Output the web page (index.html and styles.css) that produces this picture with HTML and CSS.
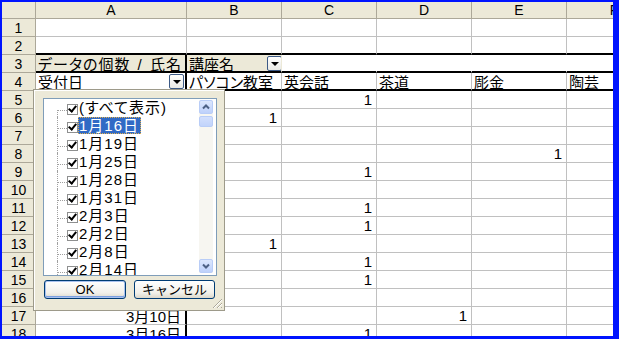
FILE: index.html
```html
<!DOCTYPE html>
<html>

<head>
  <meta charset="utf-8" />
  <title>ピボットテーブル - 受付日</title>
  <link rel="stylesheet" href="styles.css">
</head>

<body>
  <div class="sheet">
    <div class="grid">
      <!-- 列見出し -->
      <div class="head"></div>
      <div class="head">A</div>
      <div class="head">B</div>
      <div class="head">C</div>
      <div class="head">D</div>
      <div class="head">E</div>
      <div class="head">F</div>

      <div class="rowhead">1</div>
      <div class="cell"></div><div class="cell"></div><div class="cell"></div><div class="cell"></div><div class="cell"></div><div class="cell"></div>

      <div class="rowhead">2</div>
      <div class="cell pv-row"></div><div class="cell pv-row"></div><div class="cell pv-row"></div><div class="cell pv-row"></div><div class="cell pv-row"></div><div class="cell pv-row"></div>

      <!-- ピボットのフィールド行 -->
      <div class="rowhead">3</div>
      <div class="cell pv-row pv-a pv-field pv-title">データの個数 / 氏名</div>
      <div class="cell pv-row pv-field pv-open">講座名<span class="drop"></span></div>
      <div class="cell pv-row pv-open"></div>
      <div class="cell pv-row pv-open"></div>
      <div class="cell pv-row pv-open"></div>
      <div class="cell pv-row pv-open"></div>

      <div class="rowhead">4</div>
      <div class="cell pv-row pv-a">受付日<span class="drop"></span></div>
      <div class="cell pv-row">パソコン教室</div>
      <div class="cell pv-row">英会話</div>
      <div class="cell pv-row">茶道</div>
      <div class="cell pv-row">彫金</div>
      <div class="cell pv-row">陶芸</div>

      <div class="rowhead">5</div>
      <div class="cell pv-a"></div><div class="cell"></div><div class="cell num">1</div><div class="cell"></div><div class="cell"></div><div class="cell"></div>

      <div class="rowhead">6</div>
      <div class="cell pv-a"></div><div class="cell num">1</div><div class="cell"></div><div class="cell"></div><div class="cell"></div><div class="cell"></div>

      <div class="rowhead">7</div>
      <div class="cell pv-a"></div><div class="cell"></div><div class="cell"></div><div class="cell"></div><div class="cell"></div><div class="cell"></div>

      <div class="rowhead">8</div>
      <div class="cell pv-a"></div><div class="cell"></div><div class="cell"></div><div class="cell"></div><div class="cell num">1</div><div class="cell"></div>

      <div class="rowhead">9</div>
      <div class="cell pv-a"></div><div class="cell"></div><div class="cell num">1</div><div class="cell"></div><div class="cell"></div><div class="cell"></div>

      <div class="rowhead">10</div>
      <div class="cell pv-a"></div><div class="cell"></div><div class="cell"></div><div class="cell"></div><div class="cell"></div><div class="cell"></div>

      <div class="rowhead">11</div>
      <div class="cell pv-a"></div><div class="cell"></div><div class="cell num">1</div><div class="cell"></div><div class="cell"></div><div class="cell"></div>

      <div class="rowhead">12</div>
      <div class="cell pv-a"></div><div class="cell"></div><div class="cell num">1</div><div class="cell"></div><div class="cell"></div><div class="cell"></div>

      <div class="rowhead">13</div>
      <div class="cell pv-a"></div><div class="cell num">1</div><div class="cell"></div><div class="cell"></div><div class="cell"></div><div class="cell"></div>

      <div class="rowhead">14</div>
      <div class="cell pv-a"></div><div class="cell"></div><div class="cell num">1</div><div class="cell"></div><div class="cell"></div><div class="cell"></div>

      <div class="rowhead">15</div>
      <div class="cell pv-a"></div><div class="cell"></div><div class="cell num">1</div><div class="cell"></div><div class="cell"></div><div class="cell"></div>

      <div class="rowhead">16</div>
      <div class="cell pv-a"></div><div class="cell"></div><div class="cell"></div><div class="cell"></div><div class="cell"></div><div class="cell"></div>

      <div class="rowhead">17</div>
      <div class="cell pv-a num">3月10日</div><div class="cell"></div><div class="cell"></div><div class="cell num">1</div><div class="cell"></div><div class="cell"></div>

      <div class="rowhead">18</div>
      <div class="cell pv-a num">3月16日</div><div class="cell"></div><div class="cell num">1</div><div class="cell"></div><div class="cell"></div><div class="cell"></div>
    </div>

    <!-- 受付日のドロップダウン -->
    <div class="filter">
      <div class="tree">
        <ul class="items">
          <li class="item"><span class="check"></span><span class="label">(すべて表示)</span></li>
          <li class="item"><span class="check"></span><span class="label selected">1月16日</span></li>
          <li class="item"><span class="check"></span><span class="label">1月19日</span></li>
          <li class="item"><span class="check"></span><span class="label">1月25日</span></li>
          <li class="item"><span class="check"></span><span class="label">1月28日</span></li>
          <li class="item"><span class="check"></span><span class="label">1月31日</span></li>
          <li class="item"><span class="check"></span><span class="label">2月3日</span></li>
          <li class="item"><span class="check"></span><span class="label">2月2日</span></li>
          <li class="item"><span class="check"></span><span class="label">2月8日</span></li>
          <li class="item"><span class="check"></span><span class="label">2月14日</span></li>
        </ul>
        <div class="vscroll">
          <div class="sb-btn">
            <svg width="12" height="12" viewBox="0 0 12 12"><path d="M3 7.5 L6 4.5 L9 7.5" fill="none" stroke="#4d6185" stroke-width="2"/></svg>
          </div>
          <div class="sb-thumb"></div>
          <div class="sb-btn sb-down">
            <svg width="12" height="12" viewBox="0 0 12 12"><path d="M3 4.5 L6 7.5 L9 4.5" fill="none" stroke="#4d6185" stroke-width="2"/></svg>
          </div>
        </div>
      </div>
      <div class="actions">
        <button class="xp-btn xp-default">OK</button>
        <button class="xp-btn">キャンセル</button>
      </div>
      <svg class="grip" width="11" height="11" viewBox="0 0 11 11">
        <path d="M10 1 L1 10 M10 5 L5 10 M10 9 L9 10" stroke="#aca899" stroke-width="1"/>
        <path d="M10 2 L2 10 M10 6 L6 10" stroke="#fff" stroke-width="1"/>
      </svg>
    </div>
  </div>
</body>

</html>
```

FILE: styles.css
```css
body {
  margin: 0;
  background-color: #0014ff;
  font-family: "Liberation Sans", "Noto Sans CJK JP", sans-serif;
  font-feature-settings: "palt" 1;
}

.sheet {
  position: relative;
  margin: 2px 0 0 2px;
  width: 611px;
  height: 334px;
  overflow: hidden;
  background-color: #fff;
}

.grid {
  display: grid;
  grid-template-columns: 34px 151px 95px 95px 95px 95px 95px;
  grid-template-rows: 17px;
  grid-auto-rows: 18px;
}

.head,
.rowhead {
  box-sizing: border-box;
  display: flex;
  align-items: center;
  justify-content: center;
  background-color: #ece9d8;
  border-right: 1px solid #aca899;
  border-bottom: 1px solid #aca899;
  font-size: 14px;
  color: #000;
}

.cell {
  box-sizing: border-box;
  display: flex;
  align-items: center;
  padding: 0 2px;
  border-right: 1px solid #c0c0c0;
  border-bottom: 1px solid #c0c0c0;
  font-size: 15px;
  white-space: nowrap;
  overflow: hidden;
  background-color: #fff;
}

.num {
  justify-content: flex-end;
  padding-right: 4px;
}

.pv-row {
  border-bottom: 2px solid #000;
}

.pv-a {
  border-right: 2px solid #000;
}

.pv-field {
  background-color: #ece9d8;
}

.pv-title {
  letter-spacing: 1px;
  word-spacing: 2px;
}

.pv-open {
  border-right-color: transparent;
}

.drop {
  position: relative;
  box-sizing: border-box;
  flex: none;
  width: 15px;
  height: 15px;
  margin-left: auto;
  border: 1px solid #3c5a86;
  border-radius: 2px;
  background: linear-gradient(#ffffff, #e9e9e4);
}

.drop::after {
  content: "";
  position: absolute;
  left: 3px;
  top: 5px;
  border-left: 4px solid transparent;
  border-right: 4px solid transparent;
  border-top: 4px solid #000;
}

.pv-a .drop {
  margin-right: -1px;
}

.pv-open .drop {
  margin-right: -3px;
}

/* ドロップダウン */
.filter {
  position: absolute;
  left: 31px;
  top: 87px;
  box-sizing: border-box;
  width: 192px;
  height: 222px;
  padding: 8px 0 0 9px;
  background-color: #ece9d8;
  border: 1px solid #9d9a8a;
  box-shadow: inset 1px 1px #fff;
}

.tree {
  box-sizing: border-box;
  display: flex;
  width: 174px;
  height: 178px;
  border: 1px solid #7f9db9;
  background-color: #fff;
  overflow: hidden;
}

.items {
  flex: 1;
  margin: 0;
  padding: 0;
  list-style: none;
}

.item {
  position: relative;
  display: flex;
  align-items: flex-start;
  height: 18px;
  padding-left: 23px;
  font-size: 15px;
}

.item::before {
  content: "";
  position: absolute;
  left: 13px;
  top: 0;
  bottom: 0;
  border-left: 1px dotted #a0a0a0;
}

.item:first-child::before {
  top: 11px;
}

.item::after {
  content: "";
  position: absolute;
  left: 14px;
  top: 11px;
  width: 9px;
  border-top: 1px dotted #a0a0a0;
}

.check {
  position: relative;
  box-sizing: border-box;
  flex: none;
  width: 11px;
  height: 11px;
  margin-top: 5px;
  border: 1px solid #8e8f8f;
  background-color: #fff;
}

.check::after {
  content: "";
  position: absolute;
  left: 2px;
  top: -1px;
  width: 3px;
  height: 6px;
  border: solid #000;
  border-width: 0 2px 2px 0;
  transform: rotate(40deg);
}

.label {
  height: 17px;
  line-height: 17px;
  padding: 0 2px 0 1px;
  letter-spacing: 1px;
  white-space: nowrap;
}

.selected {
  background-color: #316ac5;
  color: #fff;
  outline: 1px dotted #e0b050;
  outline-offset: -1px;
}

.vscroll {
  display: flex;
  flex-direction: column;
  width: 14px;
  margin: 1px 3px 2px 0;
  background-color: #f7f6f1;
}

.sb-btn {
  box-sizing: border-box;
  display: flex;
  align-items: center;
  justify-content: center;
  height: 14px;
  border: 1px solid #b9cdf7;
  border-radius: 2px;
  background: linear-gradient(#dce7fd, #bed1fb);
}

.sb-down {
  margin-top: auto;
}

.sb-thumb {
  box-sizing: border-box;
  height: 11px;
  margin-top: 2px;
  border: 1px solid #b9cdf7;
  border-radius: 2px;
  background: linear-gradient(#d3e0fd, #c1d3fb);
}

.actions {
  display: flex;
  gap: 8px;
  margin: 4px 0 0 1px;
}

.xp-btn {
  box-sizing: border-box;
  width: 82px;
  height: 19px;
  padding: 0;
  border: 1px solid #003c74;
  border-radius: 3px;
  background: linear-gradient(#ffffff, #f1f0ea 70%, #dcd8cb);
  font-family: "Liberation Sans", "Noto Sans CJK JP", sans-serif;
  font-size: 13px;
  line-height: 16px;
  color: #000;
}

.xp-btn + .xp-btn {
  width: 81px;
}

.xp-default {
  box-shadow: inset 0 0 0 1px #a9c2ef, inset 0 -1px 0 1px #7b9fe0;
}

.grip {
  position: absolute;
  right: 1px;
  bottom: 1px;
}
```
